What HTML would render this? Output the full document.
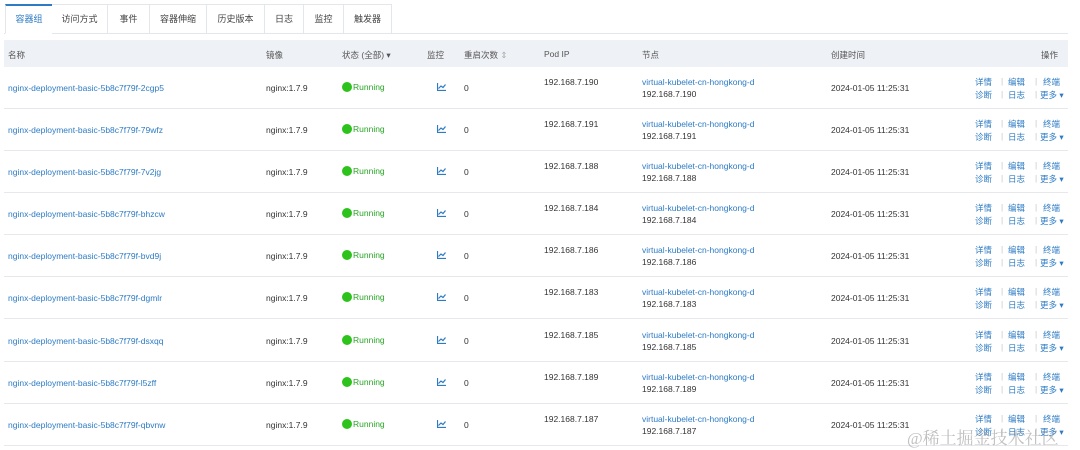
<!DOCTYPE html>
<html><head><meta charset="utf-8"><style>
*{margin:0;padding:0;box-sizing:border-box}
body{width:1080px;height:450px;background:#fff;font-family:"Liberation Sans","Noto Sans CJK SC",sans-serif;font-size:8.5px;color:#333;position:relative;overflow:hidden}
.tabs{position:absolute;left:4px;top:4px;height:30px;width:1064px;border-bottom:1px solid #e3e6eb}
.tab{position:absolute;top:0;height:30px;border:1px solid #e3e6eb;border-left:none;background:#fff;line-height:28px;text-align:center;font-size:9px;color:#444}
.tab.a{color:#2d7bc4;border-top:2px solid #2d7bc4;border-left:1px solid #e3e6eb;border-bottom:1px solid #fff;line-height:26px}
.hd{position:absolute;left:4px;top:40px;width:1064px;height:27px;background:#eef1f5;color:#555}
.hd span{position:absolute;top:9px}
.row{position:absolute;left:4px;width:1064px;height:42px;border-bottom:1px solid #e6e8ec}
.row span,.row svg{position:absolute;white-space:nowrap}
.b{color:#2d7bc4}
.g{color:#27a624}
.dot{display:inline-block;width:10px;height:10px;border-radius:50%;background:#2dc21c;vertical-align:-2px;margin-right:1px}
.s{color:#c8c8c8}
.wm{position:absolute;left:907px;top:424px;font-family:"Liberation Serif","Noto Serif CJK SC",serif;font-size:17px;color:rgba(140,140,140,.55)}
</style></head><body>
<div class="tabs">
<div class="tab a" style="left:1px;width:48px">容器组</div>
<div class="tab" style="left:48px;width:56px">访问方式</div>
<div class="tab" style="left:104px;width:42px">事件</div>
<div class="tab" style="left:146px;width:57px">容器伸缩</div>
<div class="tab" style="left:203px;width:58px">历史版本</div>
<div class="tab" style="left:261px;width:39px">日志</div>
<div class="tab" style="left:300px;width:40px">监控</div>
<div class="tab" style="left:340px;width:48px">触发器</div>
</div>
<div class="hd">
<span style="left:4px">名称</span><span style="left:262px">镜像</span><span style="left:338px">状态 (全部) ▾</span><span style="left:423px">监控</span><span style="left:460px">重启次数 <span style="position:static;color:#aaa">⇕</span></span><span style="left:540px">Pod IP</span><span style="left:638px">节点</span><span style="left:827px">创建时间</span><span style="left:1037px">操作</span>
</div>

<div class="row" style="top:67px"><span class="b" style="left:4px;top:16px">nginx-deployment-basic-5b8c7f79f-2cgp5</span><span style="left:262px;top:16px">nginx:1.7.9</span><span class="g" style="left:338px;top:15px"><i class="dot"></i>Running</span><svg style="left:433px;top:16px" width="9" height="8" viewBox="0 0 9 8"><path d="M0.5 0v7.5H9M1.5 5.5l2.5-2.5 2 1.5 2.5-3" fill="none" stroke="#2d7bc4" stroke-width="1.2"/></svg><span style="left:460px;top:16px">0</span><span style="left:540px;top:10px">192.168.7.190</span><span class="b" style="left:638px;top:10px">virtual-kubelet-cn-hongkong-d</span><span style="left:638px;top:22px">192.168.7.190</span><span style="left:827px;top:16px">2024-01-05 11:25:31</span><span class="b" style="left:971px;top:9px">详情</span><span class="s" style="left:997px;top:9px">|</span><span class="b" style="left:1004px;top:9px">编辑</span><span class="s" style="left:1031px;top:9px">|</span><span class="b" style="left:1039px;top:9px">终端</span><span class="b" style="left:971px;top:22px">诊断</span><span class="s" style="left:997px;top:22px">|</span><span class="b" style="left:1004px;top:22px">日志</span><span class="s" style="left:1031px;top:22px">|</span><span class="b" style="left:1036px;top:22px">更多 ▾</span></div>

<div class="row" style="top:109px"><span class="b" style="left:4px;top:16px">nginx-deployment-basic-5b8c7f79f-79wfz</span><span style="left:262px;top:16px">nginx:1.7.9</span><span class="g" style="left:338px;top:15px"><i class="dot"></i>Running</span><svg style="left:433px;top:16px" width="9" height="8" viewBox="0 0 9 8"><path d="M0.5 0v7.5H9M1.5 5.5l2.5-2.5 2 1.5 2.5-3" fill="none" stroke="#2d7bc4" stroke-width="1.2"/></svg><span style="left:460px;top:16px">0</span><span style="left:540px;top:10px">192.168.7.191</span><span class="b" style="left:638px;top:10px">virtual-kubelet-cn-hongkong-d</span><span style="left:638px;top:22px">192.168.7.191</span><span style="left:827px;top:16px">2024-01-05 11:25:31</span><span class="b" style="left:971px;top:9px">详情</span><span class="s" style="left:997px;top:9px">|</span><span class="b" style="left:1004px;top:9px">编辑</span><span class="s" style="left:1031px;top:9px">|</span><span class="b" style="left:1039px;top:9px">终端</span><span class="b" style="left:971px;top:22px">诊断</span><span class="s" style="left:997px;top:22px">|</span><span class="b" style="left:1004px;top:22px">日志</span><span class="s" style="left:1031px;top:22px">|</span><span class="b" style="left:1036px;top:22px">更多 ▾</span></div>

<div class="row" style="top:151px"><span class="b" style="left:4px;top:16px">nginx-deployment-basic-5b8c7f79f-7v2jg</span><span style="left:262px;top:16px">nginx:1.7.9</span><span class="g" style="left:338px;top:15px"><i class="dot"></i>Running</span><svg style="left:433px;top:16px" width="9" height="8" viewBox="0 0 9 8"><path d="M0.5 0v7.5H9M1.5 5.5l2.5-2.5 2 1.5 2.5-3" fill="none" stroke="#2d7bc4" stroke-width="1.2"/></svg><span style="left:460px;top:16px">0</span><span style="left:540px;top:10px">192.168.7.188</span><span class="b" style="left:638px;top:10px">virtual-kubelet-cn-hongkong-d</span><span style="left:638px;top:22px">192.168.7.188</span><span style="left:827px;top:16px">2024-01-05 11:25:31</span><span class="b" style="left:971px;top:9px">详情</span><span class="s" style="left:997px;top:9px">|</span><span class="b" style="left:1004px;top:9px">编辑</span><span class="s" style="left:1031px;top:9px">|</span><span class="b" style="left:1039px;top:9px">终端</span><span class="b" style="left:971px;top:22px">诊断</span><span class="s" style="left:997px;top:22px">|</span><span class="b" style="left:1004px;top:22px">日志</span><span class="s" style="left:1031px;top:22px">|</span><span class="b" style="left:1036px;top:22px">更多 ▾</span></div>

<div class="row" style="top:193px"><span class="b" style="left:4px;top:16px">nginx-deployment-basic-5b8c7f79f-bhzcw</span><span style="left:262px;top:16px">nginx:1.7.9</span><span class="g" style="left:338px;top:15px"><i class="dot"></i>Running</span><svg style="left:433px;top:16px" width="9" height="8" viewBox="0 0 9 8"><path d="M0.5 0v7.5H9M1.5 5.5l2.5-2.5 2 1.5 2.5-3" fill="none" stroke="#2d7bc4" stroke-width="1.2"/></svg><span style="left:460px;top:16px">0</span><span style="left:540px;top:10px">192.168.7.184</span><span class="b" style="left:638px;top:10px">virtual-kubelet-cn-hongkong-d</span><span style="left:638px;top:22px">192.168.7.184</span><span style="left:827px;top:16px">2024-01-05 11:25:31</span><span class="b" style="left:971px;top:9px">详情</span><span class="s" style="left:997px;top:9px">|</span><span class="b" style="left:1004px;top:9px">编辑</span><span class="s" style="left:1031px;top:9px">|</span><span class="b" style="left:1039px;top:9px">终端</span><span class="b" style="left:971px;top:22px">诊断</span><span class="s" style="left:997px;top:22px">|</span><span class="b" style="left:1004px;top:22px">日志</span><span class="s" style="left:1031px;top:22px">|</span><span class="b" style="left:1036px;top:22px">更多 ▾</span></div>

<div class="row" style="top:235px"><span class="b" style="left:4px;top:16px">nginx-deployment-basic-5b8c7f79f-bvd9j</span><span style="left:262px;top:16px">nginx:1.7.9</span><span class="g" style="left:338px;top:15px"><i class="dot"></i>Running</span><svg style="left:433px;top:16px" width="9" height="8" viewBox="0 0 9 8"><path d="M0.5 0v7.5H9M1.5 5.5l2.5-2.5 2 1.5 2.5-3" fill="none" stroke="#2d7bc4" stroke-width="1.2"/></svg><span style="left:460px;top:16px">0</span><span style="left:540px;top:10px">192.168.7.186</span><span class="b" style="left:638px;top:10px">virtual-kubelet-cn-hongkong-d</span><span style="left:638px;top:22px">192.168.7.186</span><span style="left:827px;top:16px">2024-01-05 11:25:31</span><span class="b" style="left:971px;top:9px">详情</span><span class="s" style="left:997px;top:9px">|</span><span class="b" style="left:1004px;top:9px">编辑</span><span class="s" style="left:1031px;top:9px">|</span><span class="b" style="left:1039px;top:9px">终端</span><span class="b" style="left:971px;top:22px">诊断</span><span class="s" style="left:997px;top:22px">|</span><span class="b" style="left:1004px;top:22px">日志</span><span class="s" style="left:1031px;top:22px">|</span><span class="b" style="left:1036px;top:22px">更多 ▾</span></div>

<div class="row" style="top:277px"><span class="b" style="left:4px;top:16px">nginx-deployment-basic-5b8c7f79f-dgmlr</span><span style="left:262px;top:16px">nginx:1.7.9</span><span class="g" style="left:338px;top:15px"><i class="dot"></i>Running</span><svg style="left:433px;top:16px" width="9" height="8" viewBox="0 0 9 8"><path d="M0.5 0v7.5H9M1.5 5.5l2.5-2.5 2 1.5 2.5-3" fill="none" stroke="#2d7bc4" stroke-width="1.2"/></svg><span style="left:460px;top:16px">0</span><span style="left:540px;top:10px">192.168.7.183</span><span class="b" style="left:638px;top:10px">virtual-kubelet-cn-hongkong-d</span><span style="left:638px;top:22px">192.168.7.183</span><span style="left:827px;top:16px">2024-01-05 11:25:31</span><span class="b" style="left:971px;top:9px">详情</span><span class="s" style="left:997px;top:9px">|</span><span class="b" style="left:1004px;top:9px">编辑</span><span class="s" style="left:1031px;top:9px">|</span><span class="b" style="left:1039px;top:9px">终端</span><span class="b" style="left:971px;top:22px">诊断</span><span class="s" style="left:997px;top:22px">|</span><span class="b" style="left:1004px;top:22px">日志</span><span class="s" style="left:1031px;top:22px">|</span><span class="b" style="left:1036px;top:22px">更多 ▾</span></div>

<div class="row" style="top:320px"><span class="b" style="left:4px;top:16px">nginx-deployment-basic-5b8c7f79f-dsxqq</span><span style="left:262px;top:16px">nginx:1.7.9</span><span class="g" style="left:338px;top:15px"><i class="dot"></i>Running</span><svg style="left:433px;top:16px" width="9" height="8" viewBox="0 0 9 8"><path d="M0.5 0v7.5H9M1.5 5.5l2.5-2.5 2 1.5 2.5-3" fill="none" stroke="#2d7bc4" stroke-width="1.2"/></svg><span style="left:460px;top:16px">0</span><span style="left:540px;top:10px">192.168.7.185</span><span class="b" style="left:638px;top:10px">virtual-kubelet-cn-hongkong-d</span><span style="left:638px;top:22px">192.168.7.185</span><span style="left:827px;top:16px">2024-01-05 11:25:31</span><span class="b" style="left:971px;top:9px">详情</span><span class="s" style="left:997px;top:9px">|</span><span class="b" style="left:1004px;top:9px">编辑</span><span class="s" style="left:1031px;top:9px">|</span><span class="b" style="left:1039px;top:9px">终端</span><span class="b" style="left:971px;top:22px">诊断</span><span class="s" style="left:997px;top:22px">|</span><span class="b" style="left:1004px;top:22px">日志</span><span class="s" style="left:1031px;top:22px">|</span><span class="b" style="left:1036px;top:22px">更多 ▾</span></div>

<div class="row" style="top:362px"><span class="b" style="left:4px;top:16px">nginx-deployment-basic-5b8c7f79f-l5zff</span><span style="left:262px;top:16px">nginx:1.7.9</span><span class="g" style="left:338px;top:15px"><i class="dot"></i>Running</span><svg style="left:433px;top:16px" width="9" height="8" viewBox="0 0 9 8"><path d="M0.5 0v7.5H9M1.5 5.5l2.5-2.5 2 1.5 2.5-3" fill="none" stroke="#2d7bc4" stroke-width="1.2"/></svg><span style="left:460px;top:16px">0</span><span style="left:540px;top:10px">192.168.7.189</span><span class="b" style="left:638px;top:10px">virtual-kubelet-cn-hongkong-d</span><span style="left:638px;top:22px">192.168.7.189</span><span style="left:827px;top:16px">2024-01-05 11:25:31</span><span class="b" style="left:971px;top:9px">详情</span><span class="s" style="left:997px;top:9px">|</span><span class="b" style="left:1004px;top:9px">编辑</span><span class="s" style="left:1031px;top:9px">|</span><span class="b" style="left:1039px;top:9px">终端</span><span class="b" style="left:971px;top:22px">诊断</span><span class="s" style="left:997px;top:22px">|</span><span class="b" style="left:1004px;top:22px">日志</span><span class="s" style="left:1031px;top:22px">|</span><span class="b" style="left:1036px;top:22px">更多 ▾</span></div>

<div class="row" style="top:404px"><span class="b" style="left:4px;top:16px">nginx-deployment-basic-5b8c7f79f-qbvnw</span><span style="left:262px;top:16px">nginx:1.7.9</span><span class="g" style="left:338px;top:15px"><i class="dot"></i>Running</span><svg style="left:433px;top:16px" width="9" height="8" viewBox="0 0 9 8"><path d="M0.5 0v7.5H9M1.5 5.5l2.5-2.5 2 1.5 2.5-3" fill="none" stroke="#2d7bc4" stroke-width="1.2"/></svg><span style="left:460px;top:16px">0</span><span style="left:540px;top:10px">192.168.7.187</span><span class="b" style="left:638px;top:10px">virtual-kubelet-cn-hongkong-d</span><span style="left:638px;top:22px">192.168.7.187</span><span style="left:827px;top:16px">2024-01-05 11:25:31</span><span class="b" style="left:971px;top:9px">详情</span><span class="s" style="left:997px;top:9px">|</span><span class="b" style="left:1004px;top:9px">编辑</span><span class="s" style="left:1031px;top:9px">|</span><span class="b" style="left:1039px;top:9px">终端</span><span class="b" style="left:971px;top:22px">诊断</span><span class="s" style="left:997px;top:22px">|</span><span class="b" style="left:1004px;top:22px">日志</span><span class="s" style="left:1031px;top:22px">|</span><span class="b" style="left:1036px;top:22px">更多 ▾</span></div>

<div class="wm">@稀土掘金技术社区</div>
</body></html>
